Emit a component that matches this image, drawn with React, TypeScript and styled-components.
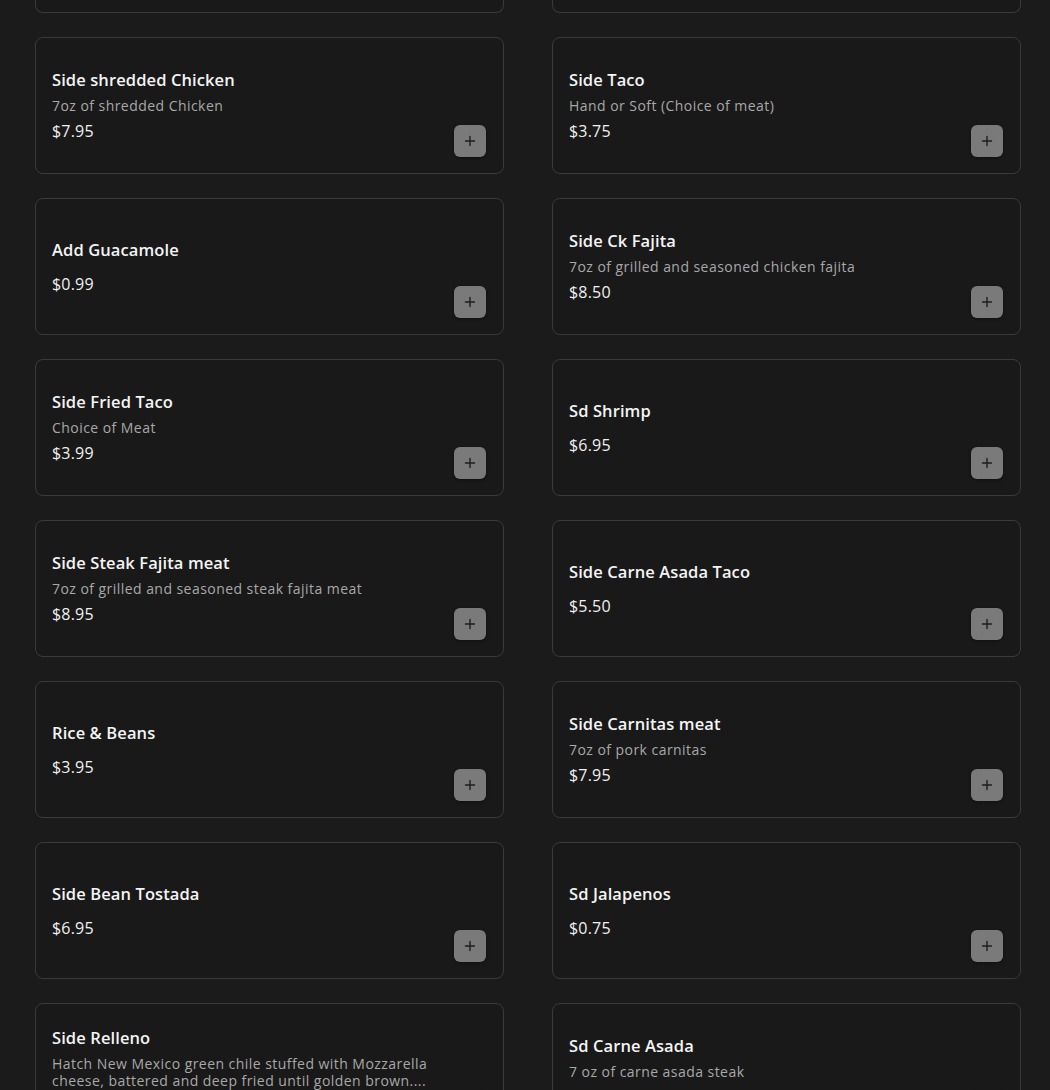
import React from "react";
import styled, { createGlobalStyle } from "styled-components";

const Global = createGlobalStyle`
  html, body { margin: 0; padding: 0; background: #1b1b1b; }
  body { font-family: "Open Sans", "Liberation Sans", sans-serif; color: #f2f2f2; overflow: hidden; }
`;

const Page = styled.div`
  padding: 0 30px 0 35px;
  height: 1090px;
  overflow: hidden;
`;

const Grid = styled.div`
  display: grid;
  grid-template-columns: 469px 469px;
  column-gap: 48px;
  row-gap: 24px;
`;

const Stub = styled.div`
  box-sizing: border-box;
  height: 13px;
  border: 1px solid #3a3a3a;
  border-top: none;
  border-radius: 0 0 8px 8px;
  background: #191919;
`;

const Card = styled.div`
  box-sizing: border-box;
  min-height: 137px;
  border: 1px solid #3a3a3a;
  border-radius: 8px;
  background: #191919;
  display: flex;
  align-items: center;
  padding: 0 16px 1px;
  position: relative;
`;

const Info = styled.div`
  display: flex;
  flex-direction: column;
  max-width: 392px;
`;

const Title = styled.div`
  font-size: 16.5px;
  font-weight: 600;
  line-height: 24px;
  color: #f4f4f4;
  letter-spacing: 0.1px;
`;

const Desc = styled.div`
  margin-top: 5px;
  font-size: 14px;
  line-height: 17px;
  color: #a8a8a8;
  letter-spacing: 0.45px;
`;

const Price = styled.div<{ $hasDesc: boolean }>`
  margin-top: ${(p) => (p.$hasDesc ? "6px" : "11px")};
  font-size: 16px;
  line-height: 22px;
  color: #f0f0f0;
  letter-spacing: 0.2px;
`;

const AddButton = styled.button`
  position: absolute;
  right: 17px;
  bottom: 16px;
  width: 32px;
  height: 32px;
  border: none;
  border-radius: 6px;
  background: #7a7a7a;
  display: flex;
  align-items: center;
  justify-content: center;
  padding: 0;
  box-shadow: 0 1px 3px rgba(0, 0, 0, 0.4);
`;

type Item = { title: string; desc?: string; price: string };

const items: Item[] = [
  { title: "Side shredded Chicken", desc: "7oz of shredded Chicken", price: "$7.95" },
  { title: "Side Taco", desc: "Hand or Soft (Choice of meat)", price: "$3.75" },
  { title: "Add Guacamole", price: "$0.99" },
  { title: "Side Ck Fajita", desc: "7oz of grilled and seasoned chicken fajita", price: "$8.50" },
  { title: "Side Fried Taco", desc: "Choice of Meat", price: "$3.99" },
  { title: "Sd Shrimp", price: "$6.95" },
  { title: "Side Steak Fajita meat", desc: "7oz of grilled and seasoned steak fajita meat", price: "$8.95" },
  { title: "Side Carne Asada Taco", price: "$5.50" },
  { title: "Rice & Beans", price: "$3.95" },
  { title: "Side Carnitas meat", desc: "7oz of pork carnitas", price: "$7.95" },
  { title: "Side Bean Tostada", price: "$6.95" },
  { title: "Sd Jalapenos", price: "$0.75" },
  {
    title: "Side Relleno",
    desc: "Hatch New Mexico green chile stuffed with Mozzarella cheese, battered and deep fried until golden brown....",
    price: "$4.95",
  },
  { title: "Sd Carne Asada", desc: "7 oz of carne asada steak", price: "$9.95" },
];

const Plus = () => (
  <svg width="12" height="12" viewBox="0 0 12 12" fill="none">
    <path d="M6 1.5v9M1.5 6h9" stroke="#1e1e1e" strokeWidth="1.4" strokeLinecap="round" />
  </svg>
);

export default function App() {
  return (
    <>
      <Global />
      <Page>
        <Grid>
          <Stub />
          <Stub />
          {items.map((it, i) => (
            <Card key={i}>
              <Info>
                <Title>{it.title}</Title>
                {it.desc ? <Desc>{it.desc}</Desc> : null}
                <Price $hasDesc={!!it.desc}>{it.price}</Price>
              </Info>
              <AddButton aria-label="Add">
                <Plus />
              </AddButton>
            </Card>
          ))}
        </Grid>
      </Page>
    </>
  );
}
